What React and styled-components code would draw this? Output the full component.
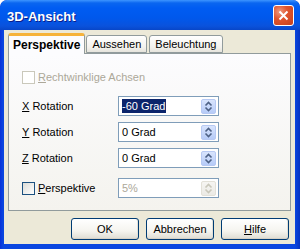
import React from 'react';
import styled, { createGlobalStyle } from 'styled-components';

const Global = createGlobalStyle`
html, body {
    margin: 0;
    padding: 0;
    background: #ffffff;
}
body {
    font-family: "Liberation Sans", Arial, sans-serif;
    font-size: 11px;
    color: #000;
}
`;

const Frame = styled.div`
width: 300px;
height: 249px;
box-sizing: border-box;
display: flex;
flex-direction: column;
background: linear-gradient(to right, #0831d9 0, #0a46e0 3px, #0a46e0 calc(100% - 5px), #0633c0 100%);
border-radius: 7px 7px 0 0;
padding: 0 5px 5px 4px;
overflow: hidden;
`;

const TitleBar = styled.div`
height: 30px;
margin: 0 -5px 0 -4px;
padding: 0 6px 0 7px;
display: flex;
align-items: center;
justify-content: space-between;
background: linear-gradient(to bottom, #3d95ff 0, #0a66f0 3px, #005cf2 8px, #0058ec 18px, #0a52dc 26px, #0846c8 30px);
border-radius: 7px 7px 0 0;
`;

const Title = styled.span`
color: #fff;
font-weight: bold;
font-size: 13px;
text-shadow: 1px 1px 0 #0a1e8c;
padding-top: 2px;
`;

const CloseButton = styled.div`
width: 19px;
height: 19px;
border: 1px solid #fff;
border-radius: 3px;
background: radial-gradient(circle at 30% 30%, #ee9a80 0, #e0552e 40%, #c4401b 100%);
display: flex;
align-items: center;
justify-content: center;
`;

const Client = styled.div`
flex: 1;
background: #ece9d8;
display: flex;
flex-direction: column;
padding: 3px 4px 4px 4px;
`;

const TabStrip = styled.div`
display: flex;
align-items: flex-end;
height: 20px;
position: relative;
z-index: 1;
`;

const Tab = styled.div`
box-sizing: border-box;
height: ${p => (p.$active ? '21px' : '18px')};
margin-bottom: ${p => (p.$active ? '-1px' : '0')};
margin-right: ${p => (p.$active ? '1px' : '2px')};
padding: 0 ${p => (p.$active ? '4px' : '5px')};
border: 1px solid #919b9c;
border-bottom: ${p => (p.$active ? 'none' : '1px solid #919b9c')};
border-top: ${p => (p.$active ? '3px solid #f6b33a' : '1px solid #919b9c')};
border-radius: 3px 3px 0 0;
background: ${p => (p.$active ? '#fcfcfe' : 'linear-gradient(to bottom, #ffffff, #f3f2ed 70%, #e6e4dc)')};
font-weight: ${p => (p.$active ? 'bold' : 'normal')};
font-size: ${p => (p.$active ? '12px' : '11px')};
display: flex;
align-items: center;
`;

const Panel = styled.div`
box-sizing: border-box;
height: 158px;
border: 1px solid #919b9c;
background: linear-gradient(to bottom, #fcfcfe, #f4f3ee);
padding: 13px 0 0 13px;
`;

const CheckRow = styled.label`
display: flex;
align-items: center;
height: 20px;
margin-bottom: 9px;
color: ${p => (p.$disabled ? '#aca899' : '#000')};
`;

const Box = styled.span`
box-sizing: border-box;
width: 13px;
height: 13px;
border: 1px solid ${p => (p.$disabled ? '#cac8bb' : '#1c5180')};
background: ${p => (p.$disabled ? '#fff' : 'linear-gradient(135deg, #dcdcd7, #ffffff)')};
margin-right: 3px;
flex-shrink: 0;
`;

const Grid = styled.div`
display: grid;
grid-template-columns: 96px 101px;
grid-auto-rows: 20px;
row-gap: 6px;
align-items: center;
`;

const Label = styled.span`
display: flex;
align-items: center;
color: #000;
margin-top: ${p => p.$offset || 0}px;
`;

const Field = styled.div`
box-sizing: border-box;
height: 20px;
border: 1px solid #7f9db9;
background: #fff;
display: flex;
align-items: center;
justify-content: space-between;
padding: 0 2px 0 1px;
margin-top: ${p => p.$offset || 0}px;
color: ${p => (p.$disabled ? '#aca899' : '#000')};
`;

const Selected = styled.span`
background: #0b246b;
color: #fff;
padding: 1px 1px 1px 0;
`;

const FieldText = styled.span`
padding-left: 2px;
`;

const Spin = styled.div`
box-sizing: border-box;
width: 15px;
height: 15px;
border-radius: 2px;
border: 1px solid ${p => (p.$disabled ? '#e3e1d8' : '#b7c9f3')};
background: ${p => (p.$disabled ? 'linear-gradient(to bottom, #f6f5f2, #ebeae5)' : 'linear-gradient(to bottom, #d8e4fd, #b6cbf7)')};
display: flex;
align-items: center;
justify-content: center;
`;

const Buttons = styled.div`
display: flex;
justify-content: flex-end;
gap: 7px;
margin-top: auto;
padding-right: 2px;
`;

const Button = styled.div`
box-sizing: border-box;
width: 68px;
height: 22px;
border: 1px solid #003c74;
border-radius: 3px;
background: linear-gradient(to bottom, #ffffff 0, #f5f4ef 60%, #dedcd2 100%);
box-shadow: inset 0 -1px 0 #d6d0c5, inset -1px 0 0 #e3e0d6;
display: flex;
align-items: center;
justify-content: center;
`;

const U = styled.span`
text-decoration: underline;
`;

const SpinIcon = ({ disabled }) => (
    <Spin $disabled={disabled}>
        <svg width="9" height="11" viewBox="0 0 9 11">
            <path d="M1.5 4.5 L4.5 1.5 L7.5 4.5 M1.5 6.5 L4.5 9.5 L7.5 6.5" fill="none" stroke={disabled ? '#c9c7ba' : '#4d6185'} strokeWidth="1.6" />
        </svg>
    </Spin>
);

export default function App() {
    return (
        <>
            <Global />
            <Frame>
                <TitleBar>
                    <Title>3D-Ansicht</Title>
                    <CloseButton>
                        <svg width="11" height="11" viewBox="0 0 11 11">
                            <path d="M1.5 1.5 L9.5 9.5 M9.5 1.5 L1.5 9.5" stroke="#fff" strokeWidth="2" />
                        </svg>
                    </CloseButton>
                </TitleBar>
                <Client>
                    <TabStrip>
                        <Tab $active>Perspektive</Tab>
                        <Tab>Aussehen</Tab>
                        <Tab>Beleuchtung</Tab>
                    </TabStrip>
                    <Panel>
                        <CheckRow $disabled>
                            <Box $disabled />
                            <span><U>R</U>echtwinklige Achsen</span>
                        </CheckRow>
                        <Grid>
                            <Label><U>X</U>&nbsp;Rotation</Label>
                            <Field>
                                <FieldText><Selected>-60 Grad</Selected></FieldText>
                                <SpinIcon />
                            </Field>
                            <Label><U>Y</U>&nbsp;Rotation</Label>
                            <Field>
                                <FieldText>0 Grad</FieldText>
                                <SpinIcon />
                            </Field>
                            <Label><U>Z</U>&nbsp;Rotation</Label>
                            <Field>
                                <FieldText>0 Grad</FieldText>
                                <SpinIcon />
                            </Field>
                            <Label $offset={8}>
                                <Box />
                                <span><U>P</U>erspektive</span>
                            </Label>
                            <Field $disabled $offset={8}>
                                <FieldText>5%</FieldText>
                                <SpinIcon disabled />
                            </Field>
                        </Grid>
                    </Panel>
                    <Buttons>
                        <Button>OK</Button>
                        <Button>Abbrechen</Button>
                        <Button><U>H</U>ilfe</Button>
                    </Buttons>
                </Client>
            </Frame>
        </>
    );
}
